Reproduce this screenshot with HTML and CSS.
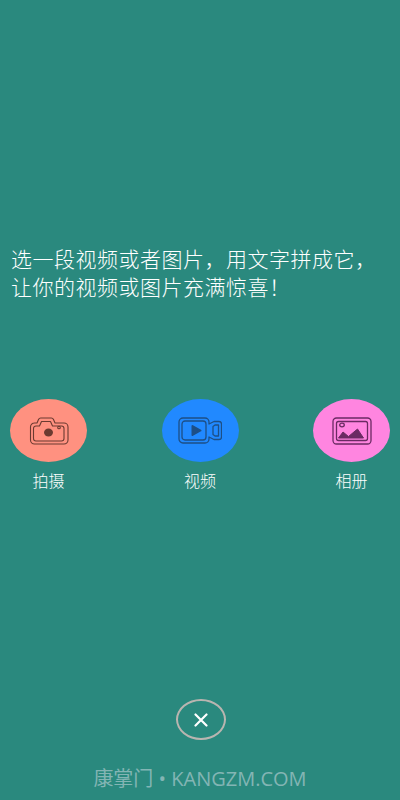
FILE: index.html
```html
<!DOCTYPE html>
<html lang="zh">
<head>
    <meta charset="UTF-8">
    <title>康掌门</title>
    <link rel="stylesheet" href="styles.css">
</head>
<body>
    <div class="page">
        <div class="intro">
            <p>选一段视频或者图片，用文字拼成它，</p>
            <p>让你的视频或图片充满惊喜！</p>
        </div>

        <div class="actions">
            <div class="action">
                <div class="bubble camera">
                    <svg width="40" height="28" viewBox="0 0 40 28" fill="none" stroke="#6b3a30" stroke-width="1.100" stroke-linejoin="round">
                        <path d="M5 6h3l1.500-3.500a2.500 2.500 0 0 1 2.500-1.500h10a2.500 2.500 0 0 1 2.500 1.500l1.500 3.500h9a4 4 0 0 1 4 4v13a4 4 0 0 1-4 4h-29.500a4 4 0 0 1-4-4v-13a4 4 0 0 1 4-4z"/>
                        <path d="M7 9h3.500l2-4.500h9l2 4.500h9a2.500 2.500 0 0 1 2.500 2.500v10a2.500 2.500 0 0 1-2.500 2.500h-25.500a2.500 2.500 0 0 1-2.500-2.500v-10a2.500 2.500 0 0 1 2.500-2.500z"/>
                        <ellipse cx="19.500" cy="15.500" rx="4.500" ry="4" fill="#6b3a30" stroke="none"/>
                        <circle cx="30" cy="10.500" r="1.300"/>
                    </svg>
                </div>
                <span>拍摄</span>
            </div>
            <div class="action">
                <div class="bubble video">
                    <svg width="44" height="27" viewBox="0 0 44 27" fill="none" stroke="#1d4f86" stroke-width="1.300" stroke-linejoin="round">
                        <path d="M5 1h22a4 4 0 0 1 4 4v2l5-2.500h5a2.500 2.500 0 0 1 2.500 2.500v13a2.500 2.500 0 0 1-2.500 2.500h-5l-5-2.500v2a4 4 0 0 1-4 4h-22a4 4 0 0 1-4-4v-17a4 4 0 0 1 4-4z"/>
                        <rect x="4" y="4" width="24" height="19" rx="3"/>
                        <path d="M35 9.500l2-1.500h3.500v11h-3.500l-2-1.500z"/>
                        <path d="M14.500 9l8 4.500-8 4.500z" fill="#1d4f86" stroke-width="2"/>
                    </svg>
                </div>
                <span>视频</span>
            </div>
            <div class="action">
                <div class="bubble album">
                    <svg width="40" height="28" viewBox="0 0 40 28" fill="none" stroke="#6b2a63" stroke-width="1.300">
                        <rect x="1" y="1" width="38" height="26" rx="3.500"/>
                        <rect x="4.500" y="4.500" width="31" height="19" rx="2"/>
                        <ellipse cx="10" cy="8" rx="2.300" ry="1.800"/>
                        <path d="M6.500 21l4.500-6 5.500 4.500 9-7.500 6 9z" fill="#6b2a63" stroke-width="1" stroke-linejoin="round"/>
                    </svg>
                </div>
                <span>相册</span>
            </div>
        </div>

        <div class="close">
            <svg width="16" height="14" viewBox="0 0 16 14" stroke="#fff" stroke-width="2.200" stroke-linecap="round">
                <path d="M2.500 1.500l11 11M13.500 1.500l-11 11"/>
            </svg>
        </div>

        <div class="footer">康掌门 • KANGZM.COM</div>
    </div>
</body>
</html>
```

FILE: styles.css
```css
html, body {
    margin: 0;
    height: 100%;
}

.page {
    height: 800px;
    box-sizing: border-box;
    padding-top: 244px;
    display: flex;
    flex-direction: column;
    background-color: #2a897e;
    color: white;
    font-family: "Liberation Sans", "Noto Sans CJK SC", sans-serif;
    overflow: hidden;
}

.intro {
    padding-left: 11px;
    font-family: "Noto Sans CJK SC", sans-serif;
    font-size: 21px;
    font-weight: 300;
    letter-spacing: 0.5px;
    line-height: 28px;
    white-space: nowrap;
}

.intro p {
    margin: 0;
}

.actions {
    display: flex;
    justify-content: space-between;
    margin-top: 99px;
    padding: 0 10px;
}

.action {
    display: flex;
    flex-direction: column;
    align-items: center;
    font-size: 16px;
    font-weight: 300;
}

.action span {
    margin-top: 10px;
    line-height: 20px;
}

.bubble {
    width: 77px;
    height: 63px;
    border-radius: 50%;
    display: flex;
    align-items: center;
    justify-content: center;
}

.camera {
    background-color: #ff9180;
}

.video {
    background-color: #2189ff;
}

.album {
    background-color: #ff85e0;
}

.close {
    width: 50px;
    height: 41px;
    box-sizing: border-box;
    margin: 207px 0 0 176px;
    border: 2px solid #b9b5b0;
    border-radius: 50%;
    display: flex;
    align-items: center;
    justify-content: center;
}

.footer {
    margin-top: 25px;
    text-align: center;
    font-family: "Open Sans", "Noto Sans CJK SC", sans-serif;
    font-size: 20px;
    line-height: 27px;
    color: #83b5b4;
}
```
